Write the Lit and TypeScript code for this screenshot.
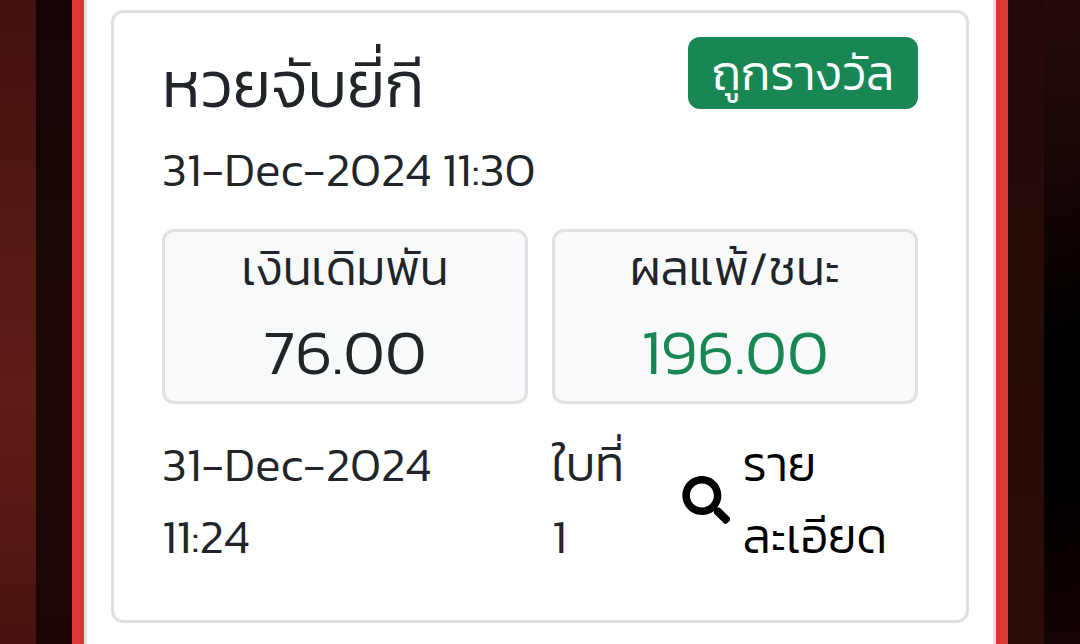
import { LitElement, html, css } from 'lit';
import { customElement, property } from 'lit/decorators.js';

// grey box with a caption and an amount
@customElement('amount-box')
export class AmountBox extends LitElement {
  @property() caption = '';
  @property() amount = '';

  static styles = css`
    :host {
      display: block;
      box-sizing: border-box;
      height: 175px;
      border: 3px solid #dee0e4;
      border-radius: 12px;
      background: #f8f9fb;
      text-align: center;
      white-space: nowrap;
    }
    .caption {
      height: 72px;
      line-height: 72px;
      font-size: 48px;
    }
    .amount {
      padding-top: 9px;
      font-size: 64.44px;
      line-height: 77px;
    }
    :host([win]) .amount {
      color: #198754;
    }
  `;

  render() {
    return html`
      <div class="caption">${this.caption}</div>
      <div class="amount">${this.amount}</div>
    `;
  }
}

@customElement('app-root')
export class AppRoot extends LitElement {
  static styles = css`
    :host {
      display: grid;
      grid-template-columns: 36px 36px 936px 36px 36px;
      height: 644px;
      overflow: hidden;
      color: #212529;
      font-family: 'Kanit', 'Prompt', 'Noto Sans Thai', 'Open Sans', sans-serif;
      font-weight: 300;
      font-size: 48px;
      line-height: 72px;
    }
    .outer-left {
      background: linear-gradient(#42120f, #5e1b18 60%, #5a1815 75%, #461310);
    }
    .inner-left {
      background: linear-gradient(#140504, #1e0807 60%, #1b0605);
    }
    .inner-right {
      background: linear-gradient(#230a09, #270b09 50%, #2c0d0b);
    }
    .outer-right {
      background: linear-gradient(165deg, #260a0c, #180605 25%, #000 54%, #000 74%, #150403);
    }
    .page {
      box-sizing: border-box;
      height: 644px;
      border: solid #dc3833;
      border-width: 0 12px;
      background: #e9dfe1;
      padding: 0 3px;
    }
    .sheet {
      box-sizing: border-box;
      height: 644px;
      padding: 10px 24px 21px;
      background: #fff;
    }
    .card {
      box-sizing: border-box;
      height: 613px;
      border: 3px solid #dee0e4;
      border-radius: 12px;
      padding: 24px 48px;
    }
    .head {
      display: flex;
      justify-content: space-between;
      height: 96px;
    }
    .title {
      padding-top: 9px;
      font-size: 64.44px;
      line-height: 77px;
      white-space: nowrap;
    }
    .badge {
      box-sizing: border-box;
      width: 230px;
      height: 72px;
      border-radius: 12px;
      background: #198754;
      color: #fff;
      text-align: center;
      white-space: nowrap;
    }
    .date {
      height: 96px;
    }
    .boxes {
      display: grid;
      grid-template-columns: 1fr 1fr;
      gap: 24px;
    }
    .foot {
      display: grid;
      grid-template-columns: 390px 130px 48px 1fr;
      padding-top: 24px;
    }
    .icon {
      width: 48px;
      height: 48px;
      margin-top: 48px;
    }
    .detail {
      padding-left: 12.5px;
      color: #000;
    }
  `;

  render() {
    return html`
      <div class="outer-left"></div>
      <div class="inner-left"></div>
      <div class="page">
        <div class="sheet">
          <div class="card">
            <div class="head">
              <div class="title">หวยจับยี่กี</div>
              <div class="badge">ถูกรางวัล</div>
            </div>
            <div class="date">31-Dec-2024 11:30</div>
            <div class="boxes">
              <amount-box caption="เงินเดิมพัน" amount="76.00"></amount-box>
              <amount-box win caption="ผลแพ้/ชนะ" amount="196.00"></amount-box>
            </div>
            <div class="foot">
              <div>31-Dec-2024<br />11:24</div>
              <div>ใบที่<br />1</div>
              <svg class="icon" viewBox="-4 0 512 512">
                <path d="M505 442.700 405.300 343c-4.500-4.500-10.600-7-17-7H372c27.600-35.300 44-79.700 44-128C416 93.100 322.900 0 208 0S0 93.100 0 208s93.100 208 208 208c48.300 0 92.700-16.400 128-44v16.300c0 6.400 2.500 12.500 7 17l99.700 99.700c9.400 9.400 24.600 9.400 33.900 0l28.300-28.300c9.400-9.400 9.400-24.600.1-34zM208 336c-70.700 0-128-57.200-128-128 0-70.700 57.200-128 128-128 70.700 0 128 57.200 128 128 0 70.700-57.200 128-128 128z"/>
              </svg>
              <div class="detail">ราย<br />ละเอียด</div>
            </div>
          </div>
        </div>
      </div>
      <div class="inner-right"></div>
      <div class="outer-right"></div>
    `;
  }
}
